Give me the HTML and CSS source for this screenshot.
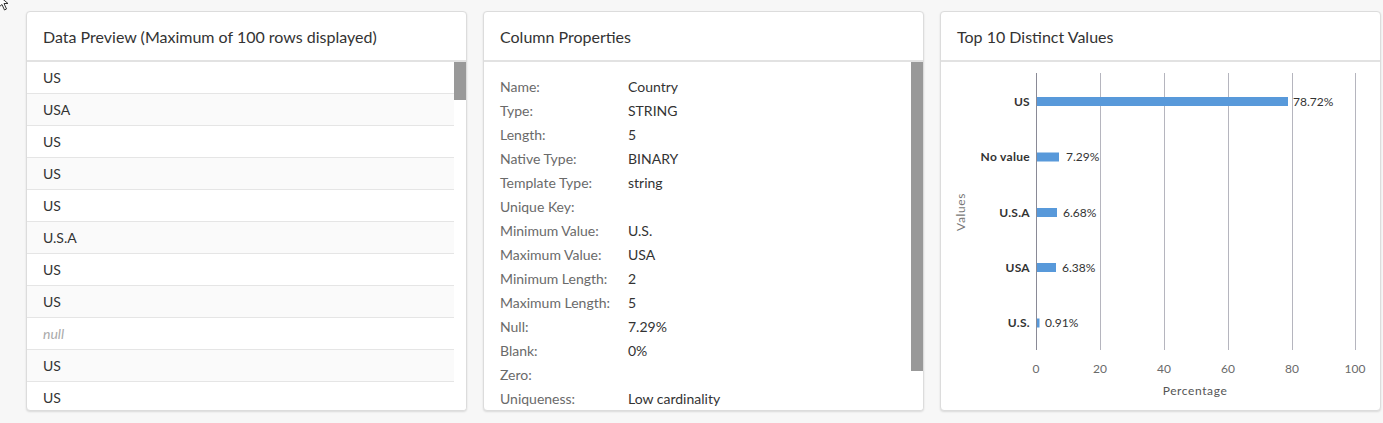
FILE: index.html
```html
<!DOCTYPE html>
<html>
<head>
<meta charset="utf-8">
<link rel="stylesheet" href="styles.css">
</head>
<body>
<svg class="cursor" width="12" height="14" viewBox="0 0 12 14">
  <path d="M-1 -4 L-1 7 L2 4.5 L4.5 10 L6.5 9 L4 3.5 L8 3.5 Z" fill="#fff" stroke="#333" stroke-width="1"/>
</svg>
<div class="cards">
  <section class="card">
    <header class="card-head">Data Preview (Maximum of 100 rows displayed)</header>
    <div class="card-body">
      <div class="rows">
        <div class="row">US</div>
        <div class="row alt">USA</div>
        <div class="row">US</div>
        <div class="row alt">US</div>
        <div class="row">US</div>
        <div class="row alt">U.S.A</div>
        <div class="row">US</div>
        <div class="row alt">US</div>
        <div class="row null">null</div>
        <div class="row alt">US</div>
        <div class="row">US</div>
      </div>
      <div class="scroll"><div class="thumb thumb-short"></div></div>
    </div>
  </section>

  <section class="card">
    <header class="card-head">Column Properties</header>
    <div class="card-body">
      <div class="props">
        <div class="prop"><span class="k">Name:</span><span class="v">Country</span></div>
        <div class="prop"><span class="k">Type:</span><span class="v">STRING</span></div>
        <div class="prop"><span class="k">Length:</span><span class="v">5</span></div>
        <div class="prop"><span class="k">Native Type:</span><span class="v">BINARY</span></div>
        <div class="prop"><span class="k">Template Type:</span><span class="v">string</span></div>
        <div class="prop"><span class="k">Unique Key:</span><span class="v"></span></div>
        <div class="prop"><span class="k">Minimum Value:</span><span class="v">U.S.</span></div>
        <div class="prop"><span class="k">Maximum Value:</span><span class="v">USA</span></div>
        <div class="prop"><span class="k">Minimum Length:</span><span class="v">2</span></div>
        <div class="prop"><span class="k">Maximum Length:</span><span class="v">5</span></div>
        <div class="prop"><span class="k">Null:</span><span class="v">7.29%</span></div>
        <div class="prop"><span class="k">Blank:</span><span class="v">0%</span></div>
        <div class="prop"><span class="k">Zero:</span><span class="v"></span></div>
        <div class="prop"><span class="k">Uniqueness:</span><span class="v">Low cardinality</span></div>
      </div>
      <div class="scroll"><div class="thumb thumb-long"></div></div>
    </div>
  </section>

  <section class="card">
    <header class="card-head">Top 10 Distinct Values</header>
    <div class="card-body chart-body">
      <svg class="chart" width="439" height="348" viewBox="0 0 439 348">
        <g class="grid">
          <line x1="159.5" y1="11" x2="159.5" y2="288"/>
          <line x1="223.5" y1="11" x2="223.5" y2="288"/>
          <line x1="287.5" y1="11" x2="287.5" y2="288"/>
          <line x1="351.5" y1="11" x2="351.5" y2="288"/>
          <line x1="414.5" y1="11" x2="414.5" y2="288"/>
        </g>
        <line class="axis" x1="95.5" y1="11" x2="95.5" y2="288"/>
        <g class="bars">
          <rect x="96" y="35" width="251" height="9"/>
          <rect x="96" y="90.5" width="22" height="9"/>
          <rect x="96" y="146" width="20" height="9"/>
          <rect x="96" y="201" width="19" height="9"/>
          <rect x="96" y="256.5" width="2.5" height="9"/>
        </g>
        <g class="cat">
          <text x="89" y="43.5">US</text>
          <text x="89" y="99">No value</text>
          <text x="89" y="154.5">U.S.A</text>
          <text x="89" y="209.5">USA</text>
          <text x="89" y="265">U.S.</text>
        </g>
        <g class="val">
          <text x="352" y="43.5">78.72%</text>
          <text x="125" y="99">7.29%</text>
          <text x="122" y="154.5">6.68%</text>
          <text x="121" y="209.5">6.38%</text>
          <text x="104" y="265">0.91%</text>
        </g>
        <g class="tick">
          <text x="95" y="311">0</text>
          <text x="159" y="311">20</text>
          <text x="223" y="311">40</text>
          <text x="287" y="311">60</text>
          <text x="351" y="311">80</text>
          <text x="414" y="311">100</text>
        </g>
        <text class="axis-title" x="254" y="333">Percentage</text>
        <text class="axis-title y-title" x="0" y="0" transform="translate(23.5 150) rotate(-90)">Values</text>
      </svg>
    </div>
  </section>
</div>
</body>
</html>
```

FILE: styles.css
```css
html, body {
  margin: 0;
  padding: 0;
}
body {
  background: #f7f7f7;
  font-family: Lato, "Open Sans", "Liberation Sans", sans-serif;
  color: #333;
  width: 1383px;
  height: 423px;
  overflow: hidden;
  position: relative;
}
.cursor {
  position: absolute;
  left: 0;
  top: 0;
  display: block;
}
.cards {
  display: grid;
  grid-template-columns: 441px 441px 441px;
  column-gap: 16px;
  padding: 11px 0 0 26px;
}
.card {
  height: 400px;
  box-sizing: border-box;
  background: #fff;
  border: 1px solid #dcdcdc;
  border-radius: 4px;
  box-shadow: 0 1px 2px rgba(0,0,0,0.12);
  overflow: hidden;
  display: flex;
  flex-direction: column;
}
.card-head {
  height: 50px;
  flex: none;
  box-sizing: border-box;
  padding: 15px 0 0 16px;
  font-size: 16px;
  line-height: 20px;
  color: #333;
  border-bottom: 2px solid #e2e2e2;
}
.card-body {
  flex: 1;
  display: flex;
  min-height: 0;
  overflow: hidden;
}
.rows {
  flex: 1;
}
.row {
  height: 31px;
  border-bottom: 1px solid #e5e5e5;
  padding-left: 16px;
  font-size: 14px;
  line-height: 31px;
  color: #333;
}
.row.alt {
  background: #fafafa;
}
.row.null {
  font-style: italic;
  color: #aaa;
}
.scroll {
  width: 12px;
  flex: none;
  background: #fff;
}
.thumb {
  background: #999;
  width: 12px;
}
.thumb-short { height: 38px; }
.thumb-long { height: 309px; }
.props {
  flex: 1;
  padding: 13px 0 0 16px;
}
.prop {
  display: flex;
  height: 24px;
  font-size: 14px;
  line-height: 24px;
}
.prop .k {
  width: 128px;
  color: #6a6a6a;
}
.prop .v {
  color: #333;
}
.chart-body {
  display: block;
}
.chart {
  display: block;
  font-family: Lato, "Open Sans", "Liberation Sans", sans-serif;
}
.grid line {
  stroke: #b5b5be;
  stroke-width: 1;
}
.axis {
  stroke: #8a8a96;
  stroke-width: 1;
}
.bars rect {
  fill: #5899da;
}
.cat text {
  font-size: 12px;
  font-weight: bold;
  text-anchor: end;
  fill: #333;
  letter-spacing: 0.3px;
}
.val text {
  font-size: 12px;
  fill: #333;
}
.tick text {
  font-size: 12px;
  fill: #6a6a6a;
  text-anchor: middle;
}
.axis-title {
  font-size: 12px;
  fill: #555;
  text-anchor: middle;
  letter-spacing: 0.6px;
}
.y-title {
  fill: #777;
}
```
